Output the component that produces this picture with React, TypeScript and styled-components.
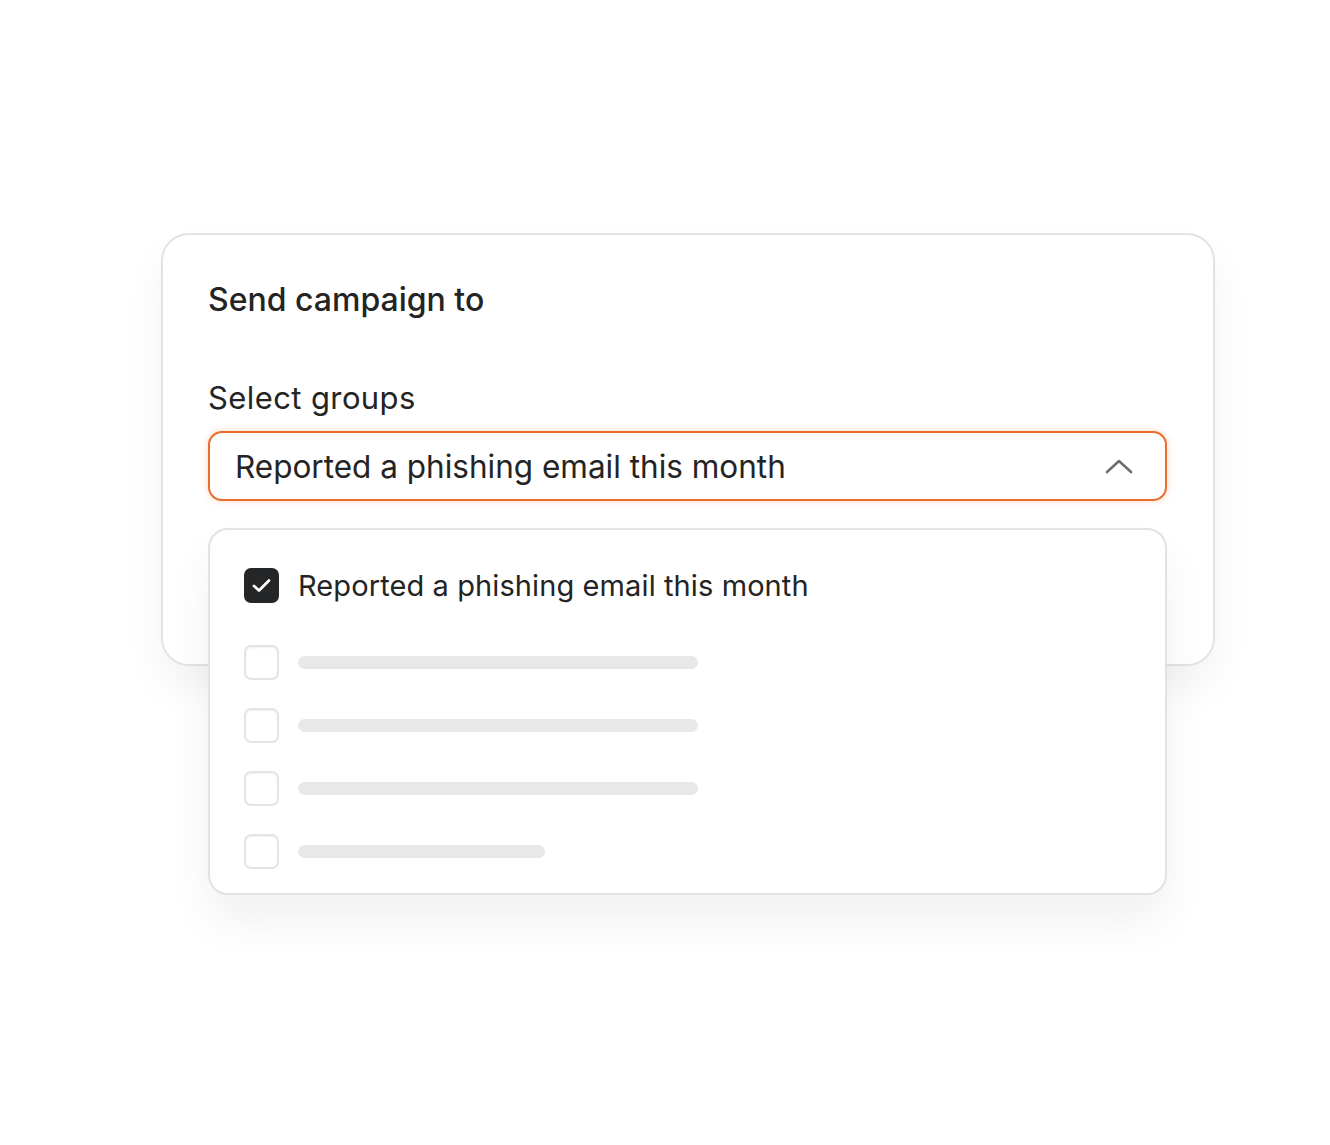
import styled, { createGlobalStyle } from 'styled-components';

const GlobalStyle = createGlobalStyle`
  html, body {
    margin: 0;
    padding: 0;
    background: #ffffff;
  }

  body {
    font-family: Inter, 'Noto Sans', sans-serif;
    color: #242424;
    -webkit-font-smoothing: antialiased;
  }
`;

const Page = styled.main`
  width: 1330px;
  height: 1145px;
  padding: 233px 0 0 161px;
  box-sizing: border-box;
`;

const Card = styled.section`
  position: relative;
  width: 1054px;
  height: 433px;
  box-sizing: border-box;
  padding: 47px 46px 0 45px;
  border: 2px solid #e3e3e3;
  border-radius: 28px;
  background: #ffffff;
  box-shadow: 0 22px 40px rgba(0, 0, 0, 0.05);
`;

const Title = styled.h2`
  margin: 0;
  font-size: 32px;
  line-height: 36px;
  font-weight: 500;
  color: #242424;
`;

const Label = styled.label`
  display: block;
  margin: 62px 0 15px;
  font-size: 31px;
  line-height: 36px;
  font-weight: 400;
  letter-spacing: 0.4px;
  color: #242424;
`;

const Field = styled.div`
  position: relative;
`;

const SelectBox = styled.button`
  display: flex;
  align-items: center;
  justify-content: space-between;
  width: 959px;
  height: 70px;
  box-sizing: border-box;
  padding: 0 32px 0 25px;
  border: 2px solid #ec6c2b;
  border-radius: 14px;
  background: #ffffff;
  box-shadow: 0 0 7px rgba(236, 108, 43, 0.28);
  font-family: inherit;
  font-size: 31.5px;
  font-weight: 400;
  color: #242424;
  cursor: pointer;
`;

const Menu = styled.div`
  position: absolute;
  top: calc(100% + 27px);
  left: 0;
  width: 959px;
  box-sizing: border-box;
  padding: 38px 34px 24px;
  border: 2px solid #e2e2e2;
  border-radius: 20px;
  background: #ffffff;
  box-shadow: 0 26px 44px rgba(0, 0, 0, 0.06);
  display: flex;
  flex-direction: column;
  gap: 28px;
`;

const Option = styled.div<{ $selected?: boolean }>`
  display: flex;
  align-items: center;
  gap: 19px;
  margin-bottom: ${(p) => (p.$selected ? '14px' : '0')};
  font-size: 29px;
  letter-spacing: 0.1px;
  color: #242424;
`;

const Box = styled.span<{ $checked?: boolean }>`
  display: flex;
  align-items: center;
  justify-content: center;
  flex: none;
  width: 35px;
  height: 35px;
  box-sizing: border-box;
  border-radius: 7px;
  background: ${(p) => (p.$checked ? '#242628' : '#ffffff')};
  border: ${(p) => (p.$checked ? 'none' : '2px solid #e4e4e4')};
  box-shadow: ${(p) => (p.$checked ? 'none' : 'inset 0 1px 2px rgba(0, 0, 0, 0.06)')};
`;

const Skeleton = styled.span<{ $width: number }>`
  display: block;
  width: ${(p) => p.$width}px;
  height: 13px;
  border-radius: 7px;
  background: #e8e8e8;
`;

const Chevron = () => (
  <svg width="28" height="16" viewBox="0 0 28 16" fill="none">
    <path d="M2 14 L14 3 L26 14" stroke="#6e6e6e" strokeWidth="2.6" strokeLinecap="round" strokeLinejoin="round" />
  </svg>
);

const Check = () => (
  <svg width="19" height="15" viewBox="0 0 19 15" fill="none">
    <path d="M2 8 L7 12.5 L17 2.5" stroke="#ffffff" strokeWidth="2.7" strokeLinecap="round" strokeLinejoin="round" />
  </svg>
);

const placeholders = [400, 400, 400, 247];

export default function App() {
  const group = 'Reported a phishing email this month';

  return (
    <>
      <GlobalStyle />
      <Page>
        <Card>
          <Title>Send campaign to</Title>
          <Label>Select groups</Label>
          <Field>
            <SelectBox type="button">
              <span>{group}</span>
              <Chevron />
            </SelectBox>
            <Menu>
              <Option $selected>
                <Box $checked>
                  <Check />
                </Box>
                {group}
              </Option>
              {placeholders.map((w, i) => (
                <Option key={i}>
                  <Box />
                  <Skeleton $width={w} />
                </Option>
              ))}
            </Menu>
          </Field>
        </Card>
      </Page>
    </>
  );
}
